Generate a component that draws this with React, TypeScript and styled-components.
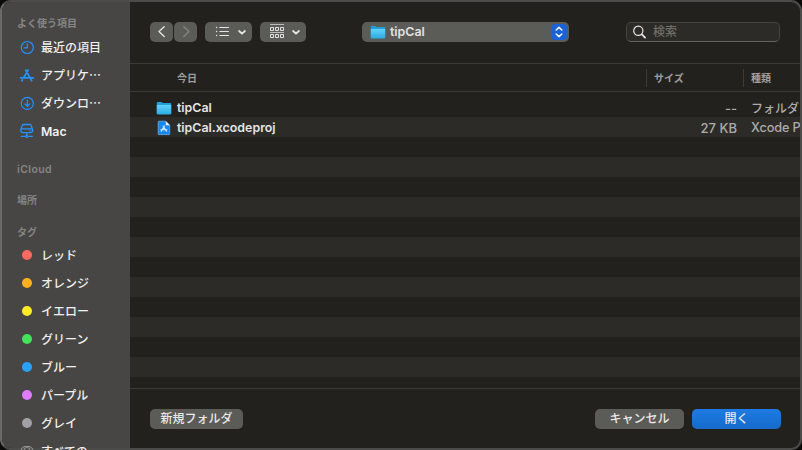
import React from 'react';
import styled, { createGlobalStyle } from 'styled-components';

const Global = createGlobalStyle`
  * { box-sizing: border-box; }
  html { overflow: hidden; }
  body { margin: 0; background: #0b0b0a; height: 450px; overflow: hidden; }
`;

const jp = '"Noto Sans CJK JP", sans-serif';

const Dialog = styled.div`
  width: 802px;
  height: 450px;
  display: flex;
  border: 2px solid #4b4b49;
  border-left-color: #6a6a68;
  border-radius: 11px;
  background: #22211d;
  color: #e2e2e0;
  font: 500 12px/20px Inter, ${jp};
  white-space: nowrap;
`;

const Sidebar = styled.nav`
  flex: 0 0 128px;
  height: 446px;
  background: #474644;
  border-radius: 9px 0 0 9px;
  padding-top: 11px;
`;

const Heading = styled.h2<{ $gap?: number }>`
  margin: ${p => p.$gap ?? 0}px 0 0 15px;
  height: 20px;
  font: 600 10px/20px Inter, ${jp};
  color: #868583;
`;

const CloudHeading = styled(Heading)`
  font-size: 10.5px;
  line-height: 22px;
  letter-spacing: 0.4px;
`;

const TagHeading = styled(Heading)`
  line-height: 22px;
`;

const SideItem = styled.div`
  display: flex;
  align-items: center;
  height: 28px;
  padding-left: 17px;
  gap: 6px;
  font: 500 12px/28px ${jp};
  color: #f0f0ee;
`;

const Latin = styled.span`
  font: 600 12.3px/28px Inter, ${jp};
  padding-top: 2px;
`;

const IconSlot = styled.span`
  flex: 0 0 16px;
  height: 16px;
  display: flex;
  align-items: center;
  justify-content: center;
`;

const Dot = styled.span<{ $color: string }>`
  width: 10px;
  height: 10px;
  border-radius: 50%;
  background: ${p => p.$color};
`;

const Main = styled.main`
  flex: 1;
  min-width: 0;
  display: flex;
  flex-direction: column;
`;

const Toolbar = styled.header`
  height: 62px;
  flex: none;
  display: flex;
  align-items: flex-start;
  padding: 20px 20px 0;
  border-bottom: 1px solid #3b3a36;
`;

const ToolButton = styled.button<{ $width: number; $gap: number }>`
  width: ${p => p.$width}px;
  height: 20px;
  margin-right: ${p => p.$gap}px;
  padding: 0;
  border: 0;
  border-radius: 5px;
  background: #5b5b57;
  display: flex;
  align-items: center;
  justify-content: center;
  svg { display: block; }
`;

const PathPopup = styled.div`
  width: 207px;
  height: 20px;
  display: flex;
  align-items: center;
  padding: 0 2px 0 8px;
  border-radius: 5px;
  background: #5b5b57;
  font-weight: 600;
  font-size: 12.4px;
`;

const PathName = styled.span`
  flex: 1;
  padding-left: 4px;
`;

const Stepper = styled.span`
  width: 16px;
  height: 16px;
  border-radius: 4px;
  background: #1a62d6;
  svg { display: block; }
`;

const Search = styled.div`
  width: 154px;
  height: 20px;
  margin-left: auto;
  padding-left: 6px;
  display: flex;
  align-items: center;
  gap: 7px;
  border: 1px solid #454440;
  border-bottom-color: #64635f;
  border-radius: 5px;
  background: #2c2b28;
  color: #6f6e6b;
`;

const Columns = styled.div`
  height: 28px;
  flex: none;
  display: grid;
  grid-template-columns: 516px 97px 1fr;
  align-items: center;
  border-bottom: 1px solid #3b3a36;
  font: 600 10px/17px ${jp};
  color: #a09f9d;
`;

const Column = styled.div<{ $pad: number; $ruled?: boolean }>`
  height: 18px;
  padding-left: ${p => p.$pad}px;
  border-left: ${p => (p.$ruled ? '1px solid #3d3c38' : '0')};
`;

const FileList = styled.div`
  flex: none;
  height: 297px;
  padding-top: 5px;
  overflow: hidden;
  border-bottom: 1px solid #3b3a36;
`;

const Row = styled.div`
  height: 20px;
  display: grid;
  grid-template-columns: 26px 21px 1fr 130px 14px 49px;
  align-items: center;
  color: #acaba9;
  font-size: 12.7px;
  line-height: 20px;
  &:nth-child(even) { background: #2c2b28; }
  svg { display: block; grid-column: 2; }
`;

const FileName = styled.span`
  color: #e4e4e2;
  font-weight: 600;
  font-size: 12.4px;
  padding-top: 1px;
`;

const Size = styled.span`
  text-align: right;
  font-size: 13px;
  padding-top: 1px;
`;

const Kind = styled.span`
  grid-column: 6;
  letter-spacing: -0.1px;
  padding-top: 1px;
`;

const KindJp = styled(Kind)`
  font: 500 12px/20px ${jp};
  letter-spacing: 0;
  padding-top: 0;
`;

const Footer = styled.footer`
  display: flex;
  padding: 20px 19px 0 20px;
  gap: 8px;
`;

const Action = styled.button<{ $width: number; $primary?: boolean; $end?: boolean }>`
  width: ${p => p.$width}px;
  height: 20px;
  margin-left: ${p => (p.$end ? 'auto' : '0')};
  padding: 0 0 2px;
  border: 0;
  border-radius: 5px;
  background: ${p => (p.$primary ? 'linear-gradient(#1e7be3, #156bcb)' : '#5b5b57')};
  color: #e9e9e7;
  font: 500 12px/18px ${jp};
`;

const blue = { fill: 'none', stroke: '#2492ff', strokeWidth: 1.2, strokeLinecap: 'round' as const, strokeLinejoin: 'round' as const };

const ClockIcon = () => (
  <svg width="16" height="16" viewBox="0 0 16 16" {...blue}>
    <circle cx="8.3" cy="8.5" r="6" /><path d="M8.3 4.8v4H5.1" />
  </svg>
);
const AppsIcon = () => (
  <svg width="16" height="16" viewBox="0 0 16 16" {...blue} strokeWidth="1.8">
    <path d="M6.7 3.1l5.9 10.5M9 3.1L4.7 10.8M3.4 13l-.4.7M1.7 10.8h7.6M12 10.8h2.3" />
  </svg>
);
const DownloadIcon = () => (
  <svg width="16" height="16" viewBox="0 0 16 16" {...blue}>
    <circle cx="8.3" cy="8.4" r="6" /><path d="M8.3 5.2v6M6 9l2.3 2.3L10.6 9" />
  </svg>
);
const MacIcon = () => (
  <svg width="16" height="16" viewBox="0 0 16 16" {...blue} strokeWidth="1.3">
    <path d="M4.600 1.500h6.200q1 0 1.300.9l1.500 4v1.400q0 1.800-1.800 1.800H3.600q-1.800 0-1.800-1.800V6.400l1.500-4q.3-.9 1.300-.9zM2.500 5.900h10.400M7.800 9.800v2.500M2.200 13.300h3.600M9.800 13.300h3.700M11 7.800h.4" />
    <circle cx="7.800" cy="13.300" r="1" />
  </svg>
);
const AllTagsIcon = () => (
  <svg width="16" height="16" viewBox="0 0 16 16" fill="none" stroke="#a5a4a2">
    <circle cx="6.500" cy="8" r="4.500" /><circle cx="9.500" cy="8" r="4.500" />
  </svg>
);
const Chevron = ({ dir, color }: { dir: 'left' | 'right'; color: string }) => (
  <svg width="12" height="14" viewBox="0 0 12 14" fill="none" stroke={color} strokeWidth="1.3" strokeLinecap="round" strokeLinejoin="round">
    <path d={dir === 'left' ? 'M8.2 1.7L3 6.5l5.2 5' : 'M3.8 1.7L9 6.5l-5.2 5'} />
  </svg>
);
const ListIcon = () => (
  <svg width="47" height="20" viewBox="0 0 47 20" fill="none" stroke="#e5e5e3" strokeLinecap="round" strokeLinejoin="round">
    <path d="M14.8 5.5h8.7M14.8 9.5h8.7M14.8 13.5h8.7" strokeWidth="1" />
    <path d="M11.5 5.5h.1M11.5 9.5h.1M11.5 13.5h.1" strokeWidth="1.3" />
    <path d="M34.1 9l2.9 2.7L39.9 9" strokeWidth="1.8" />
  </svg>
);
const GridIcon = () => (
  <svg width="46" height="20" viewBox="0 0 46 20" fill="none" stroke="#e5e5e3">
    <path d="M10 2.5h14M10 10.5h14" stroke="#bcbcba" />
    <path d="M10.5 5.5h3v3h-3zM15.5 5.5h3v3h-3zM20.5 5.5h3v3h-3zM10.5 12.5h3v3h-3zM15.5 12.5h3v3h-3zM20.5 12.5h3v3h-3z" />
    <path d="M33.1 9l2.9 2.7L38.9 9" strokeWidth="1.8" strokeLinecap="round" strokeLinejoin="round" />
  </svg>
);
const FolderIcon = () => (
  <svg width="16" height="16" viewBox="0 0 16 16">
    <defs>
      <linearGradient id="folder" x1="0" y1="0" x2="0" y2="1">
        <stop offset="0" stopColor="#64d1fb" /><stop offset="1" stopColor="#2cabe5" />
      </linearGradient>
    </defs>
    <path d="M1.6 2h4l1.100 1h7.700q.8 0 .8.8v10H.8v-11q0-.8.8-.8z" fill="#209fd8" />
    <path d="M.8 4.900h14.400v8.700q0 .8-.8.8H1.600q-.8 0-.8-.8z" fill="url(#folder)" />
  </svg>
);
const ProjectIcon = () => (
  <svg width="16" height="16" viewBox="0 0 16 16">
    <path d="M3 1.200h6.800l3.900 4v8.700q0 .7-.7.700H3q-.8 0-.8-.7V2Q2.200 1.200 3 1.200z" fill="#1687ed" stroke="#6fbafa" strokeWidth=".7" />
    <path d="M9.800 1.200l4 4h-4z" fill="#f0f7ff" />
    <path d="M7.200 6l3.200 5.300M8.400 6l-3.200 5.300M4.800 9.800h6.200" fill="none" stroke="#d5ebff" strokeWidth="1.100" strokeLinecap="round" />
  </svg>
);
const SearchIcon = () => (
  <svg width="13" height="14" viewBox="0 0 13 14" fill="none" stroke="#e8e8e6" strokeLinecap="round">
    <circle cx="5.300" cy="5.800" r="4.600" strokeWidth="1.200" /><path d="M8.800 9.300l3.300 3.300" strokeWidth="1.700" />
  </svg>
);

const places = [
  { label: '最近の項目', Icon: ClockIcon },
  { label: 'アプリケ…', Icon: AppsIcon },
  { label: 'ダウンロ…', Icon: DownloadIcon },
];
const tags = [
  ['レッド', '#ff6961'], ['オレンジ', '#ffb01f'], ['イエロー', '#ffec25'], ['グリーン', '#43e45b'],
  ['ブルー', '#2ba1ff'], ['パープル', '#df7cff'], ['グレイ', '#a0a0a6'],
];

export default function App() {
  return (
    <>
      <Global />
      <Dialog>
        <Sidebar>
          <Heading>よく使う項目</Heading>
          {places.map(({ label, Icon }) => (
            <SideItem key={label}><IconSlot><Icon /></IconSlot>{label}</SideItem>
          ))}
          <SideItem><IconSlot><MacIcon /></IconSlot><Latin>Mac</Latin></SideItem>
          <CloudHeading $gap={14}>iCloud</CloudHeading>
          <Heading $gap={11}>場所</Heading>
          <TagHeading $gap={11}>タグ</TagHeading>
          {tags.map(([label, color]) => (
            <SideItem key={label}><IconSlot><Dot $color={color} /></IconSlot>{label}</SideItem>
          ))}
          <SideItem><IconSlot><AllTagsIcon /></IconSlot>すべての</SideItem>
        </Sidebar>
        <Main>
          <Toolbar>
            <ToolButton $width={23} $gap={1} aria-label="Back"><Chevron dir="left" color="#e8e8e6" /></ToolButton>
            <ToolButton $width={23} $gap={8} aria-label="Forward"><Chevron dir="right" color="#858581" /></ToolButton>
            <ToolButton $width={47} $gap={8} aria-label="List view"><ListIcon /></ToolButton>
            <ToolButton $width={46} $gap={56} aria-label="Grouping"><GridIcon /></ToolButton>
            <PathPopup>
              <FolderIcon />
              <PathName>tipCal</PathName>
              <Stepper>
                <svg width="16" height="16" viewBox="0 0 16 16" fill="none" stroke="#edf3ff" strokeWidth="1.6" strokeLinecap="round" strokeLinejoin="round">
                  <path d="M5.200 6L8 3.400 10.800 6M5.200 10L8 12.600 10.800 10" />
                </svg>
              </Stepper>
            </PathPopup>
            <Search><SearchIcon />検索</Search>
          </Toolbar>
          <Columns>
            <Column $pad={47}>今日</Column>
            <Column $pad={7} $ruled>サイズ</Column>
            <Column $pad={7} $ruled>種類</Column>
          </Columns>
          <FileList>
            <Row><FolderIcon /><FileName>tipCal</FileName><Size>--</Size><KindJp>フォルダ</KindJp></Row>
            <Row><ProjectIcon /><FileName>tipCal.xcodeproj</FileName><Size>27 KB</Size><Kind>Xcode P</Kind></Row>
            {Array.from({ length: 13 }, (_, i) => <Row key={i} />)}
          </FileList>
          <Footer>
            <Action $width={93}>新規フォルダ</Action>
            <Action $width={89} $end>キャンセル</Action>
            <Action $width={89} $primary>開く</Action>
          </Footer>
        </Main>
      </Dialog>
    </>
  );
}
